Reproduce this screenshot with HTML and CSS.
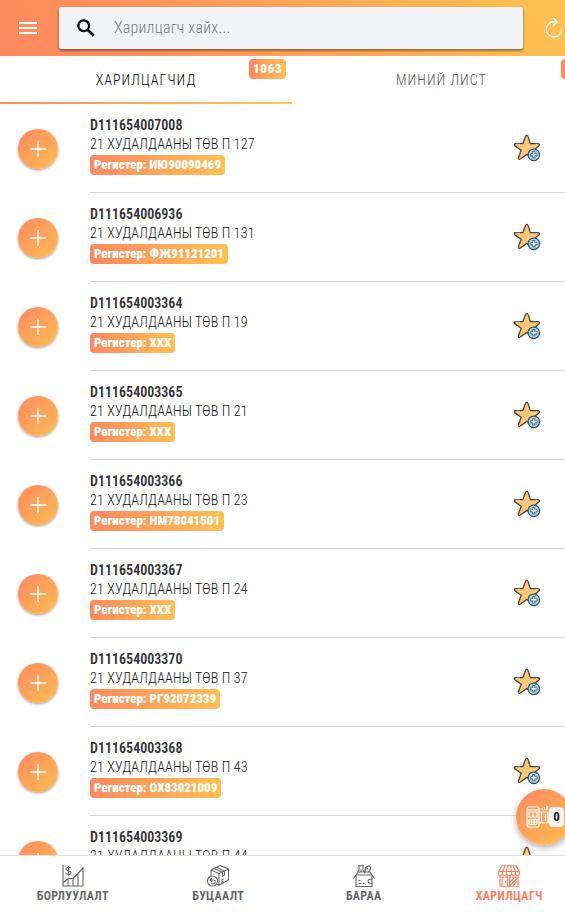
FILE: index.html
```
<!DOCTYPE html>
<html lang="mn">
<head>
    <meta charset="UTF-8">
    <meta name="viewport" content="width=device-width, initial-scale=1.0">
    <title>Харилцагч</title>
    <link rel="stylesheet" href="styles.css">
</head>
<body>
    <!-- shared icons -->
    <svg class="sprite">
        <symbol id="plus" viewBox="0 0 16 16">
            <path d="M8 0v16M0 8h16" fill="none" stroke="#fff" stroke-width="1.5"/>
        </symbol>
        <symbol id="star" viewBox="0 0 28 28">
            <path d="M13.8 1.4c.9 0 1.2.8 1.5 1.7l2 6.5 7.7.1c1.9.1 2 1.4.8 2.3l-5.7 4.7 2.1 6.6c.4 1.7-.5 2.3-1.8 1.5L14 20.4 7.3 25c-1.3.8-2.3.1-1.8-1.4l2.7-7.3L2 11.9c-1.2-.9-.9-2.1.8-2.2l7.1-.1 2.4-6.5c.3-.9.6-1.7 1.5-1.7z" fill="#ffc878" stroke="#4b443b" stroke-width="1.3" stroke-linejoin="round"/>
            <path d="M3.5 10.2h3M23 10.3l2 .2" stroke="#fff" stroke-width="1" stroke-dasharray="1 1"/>
            <circle cx="20.8" cy="20.8" r="5.8" fill="#8fd0ee" stroke="#34414b" stroke-width="1.1"/>
            <circle cx="20.8" cy="20.8" r="4.5" fill="#a5dcf5"/>
            <path d="M20.8 17.3v7M17.3 20.8h7" stroke="#283e50" stroke-width="2.8"/>
            <path d="M20.8 18v5.6M18 20.8h5.6" stroke="#fff" stroke-width="1.4"/>
        </symbol>
    </svg>

    <div class="app">
        <header class="header">
            <svg class="menu-icon" viewBox="0 0 18 12"><path d="M0 1h18M0 6h18M0 11h18" stroke="#fff" stroke-width="2"/></svg>
            <div class="search">
                <svg class="search-icon" viewBox="0 0 18 18"><circle cx="6.7" cy="6.7" r="5.4" fill="none" stroke="#000" stroke-width="2.3"/><path d="M10.7 10.7l6 6" stroke="#000" stroke-width="2.7"/></svg>
                <span class="placeholder">Харилцагч хайх...</span>
            </div>
            <svg class="refresh-icon" viewBox="0 0 18 22"><path d="M11.5 4.8H9a7.6 7.6 0 1 0 7.6 7.6" fill="none" stroke="#fff" stroke-width="1.4"/><path d="M8 1l4.2 3.8L8 8.7" fill="none" stroke="#fff" stroke-width="1.4"/></svg>
        </header>

        <nav class="tabs">
            <div class="tab active"><span class="tab-label">ХАРИЛЦАГЧИД</span><span class="badge count">1063</span></div>
            <div class="tab second"><span class="tab-label">МИНИЙ ЛИСТ</span><span class="badge count"></span></div>
        </nav>

        <main class="list">
            <div class="item">
                <button class="add"><svg><use href="#plus"/></svg></button>
                <div class="info"><b>D111654007008</b><span class="name">21 ХУДАЛДААНЫ ТӨВ П 127</span><span class="badge">Регистер: ИЮ90090469</span></div>
                <svg class="star"><use href="#star"/></svg>
            </div>
            <div class="item">
                <button class="add"><svg><use href="#plus"/></svg></button>
                <div class="info"><b>D111654006936</b><span class="name">21 ХУДАЛДААНЫ ТӨВ П 131</span><span class="badge">Регистер: ФЖ91121201</span></div>
                <svg class="star"><use href="#star"/></svg>
            </div>
            <div class="item">
                <button class="add"><svg><use href="#plus"/></svg></button>
                <div class="info"><b>D111654003364</b><span class="name">21 ХУДАЛДААНЫ ТӨВ П 19</span><span class="badge">Регистер: XXX</span></div>
                <svg class="star"><use href="#star"/></svg>
            </div>
            <div class="item">
                <button class="add"><svg><use href="#plus"/></svg></button>
                <div class="info"><b>D111654003365</b><span class="name">21 ХУДАЛДААНЫ ТӨВ П 21</span><span class="badge">Регистер: XXX</span></div>
                <svg class="star"><use href="#star"/></svg>
            </div>
            <div class="item">
                <button class="add"><svg><use href="#plus"/></svg></button>
                <div class="info"><b>D111654003366</b><span class="name">21 ХУДАЛДААНЫ ТӨВ П 23</span><span class="badge">Регистер: НМ78041501</span></div>
                <svg class="star"><use href="#star"/></svg>
            </div>
            <div class="item">
                <button class="add"><svg><use href="#plus"/></svg></button>
                <div class="info"><b>D111654003367</b><span class="name">21 ХУДАЛДААНЫ ТӨВ П 24</span><span class="badge">Регистер: XXX</span></div>
                <svg class="star"><use href="#star"/></svg>
            </div>
            <div class="item">
                <button class="add"><svg><use href="#plus"/></svg></button>
                <div class="info"><b>D111654003370</b><span class="name">21 ХУДАЛДААНЫ ТӨВ П 37</span><span class="badge">Регистер: РГ92072339</span></div>
                <svg class="star"><use href="#star"/></svg>
            </div>
            <div class="item">
                <button class="add"><svg><use href="#plus"/></svg></button>
                <div class="info"><b>D111654003368</b><span class="name">21 ХУДАЛДААНЫ ТӨВ П 43</span><span class="badge">Регистер: ОХ83021009</span></div>
                <svg class="star"><use href="#star"/></svg>
            </div>
            <div class="item">
                <button class="add"><svg><use href="#plus"/></svg></button>
                <div class="info"><b>D111654003369</b><span class="name">21 ХУДАЛДААНЫ ТӨВ П 44</span></div>
                <svg class="star"><use href="#star"/></svg>
            </div>
        </main>

        <button class="fab">
            <svg viewBox="0 0 24 24" fill="none" stroke="#fff" stroke-width="1.2">
                <rect x="1" y="2" width="12" height="20" rx="2"/>
                <path d="M1.5 4.8h11M3 7h8v5H3zM7 7.5v4M5.8 9.8L7 11l1.2-1.2M3 14.5h8v5H3zM3 17h8M5.7 14.5v5M8.3 14.5v5M13 7h9v11h-9M15.5 7v11M19.5 9v7M16 5V3M18.5 5V2M21 5V1"/>
            </svg>
            <span class="fab-count">0</span>
        </button>

        <footer class="bottom-nav">
            <div class="nav-item">
                <svg viewBox="0 0 22 22"><path d="M1 0v21h20V3L14 10.5l-3 3H6L1 18M6 13.5V21M11 13.5V21M16 8.5V21M9 3.3C8 1.8 4 1.7 4 4s5 1.3 5 3.7S4.5 9.7 3.6 7.8M6.5.8v9.7"/></svg>
                <span>БОРЛУУЛАЛТ</span>
            </div>
            <div class="nav-item">
                <svg viewBox="0 0 22 22"><path d="M4 11V5l9-4.5L21.5 4v11L12 20V8.5L4 5M12 8.5L21.500 4M7 3.5l8.500 3.700v4l2-1.200V6L9.500 2.300M14 15.500l2.500-1.200M14 17.500l2.500-1.200M12 20l-2-.8"/><circle cx="5.5" cy="16" r="5"/><path d="M5 13l-2 2 2 2M3 15h3.500c2.500 0 2.300 3.500 0 3.500H4"/></svg>
                <span>БУЦААЛТ</span>
            </div>
            <div class="nav-item">
                <svg viewBox="0 0 22 22"><path d="M3 10h16v11.500H3zM3 10l-2.500 3.500M19 10l2.500 3.500M3 10l2-3h12l2 3M5 .7h6M6 1v4L4.500 7M10 1v4l2 3M12 7V4.500C12 2 16 0 17 1.500S17.500 6 15 7M8 7V4.500M12 4.500l3-1M5.500 15.500h2M5.500 18.500h3M10 18.500h1.500M19 14c-3 0-4 1.500-4 2.500s2 2 4 2"/></svg>
                <span>БАРАА</span>
            </div>
            <div class="nav-item active">
                <svg viewBox="0 0 22 22"><path d="M4 .7h14l3.500 6v2c0 2.400-3.500 2.400-4 0 0 2.400-4 2.400-4 0 0 2.400-5 2.400-5 0 0 2.400-4 2.400-4 0-.5 2.400-4 2.400-4 0v-2zM.5 6.500h21M7 .7l-2.500 6v2M9.500.7l-1 6v2M12.500.7l1 6v2M15 .7l2.500 6v2M2 10.500V21.300h18V10.500M4 21V12h5.500v9M7.500 16v2M11.500 21V12H20M12 17l4-4M12 20.500l7-7M15 20.500l4-4"/></svg>
                <span>ХАРИЛЦАГЧ</span>
            </div>
        </footer>
    </div>
</body>
</html>
```
FILE: styles.css
```
* {
    box-sizing: border-box;
}

html, body {
    height: 100%;
    margin: 0;
    overflow: hidden;
}

body {
    font-family: "Roboto Condensed", Roboto, "Liberation Sans", sans-serif;
    font-stretch: 75%;
    font-weight: 300;
    background-color: #fff;
    color: #333;
}

button {
    border: none;
    padding: 0;
    font-family: inherit;
}

.sprite {
    display: none;
}

.app {
    position: relative;
    display: flex;
    flex-direction: column;
    width: 582px;
    height: 912px;
}

.header {
    display: flex;
    align-items: center;
    flex: none;
    height: 56px;
    padding-left: 19px;
    background: linear-gradient(45deg, #ff8960, #ff8f5c 20%, #ffbf52 90%);
}

.menu-icon {
    width: 18px;
    height: 12px;
}

.search {
    display: flex;
    align-items: center;
    width: 464px;
    height: 42px;
    margin-left: 22px;
    padding-left: 18px;
    border-radius: 2px;
    background-color: #f3f4f7;
    box-shadow: 0 2px 2px rgba(0, 0, 0, 0.24), 0 1px 3px rgba(0, 0, 0, 0.3);
}

.search-icon {
    width: 18px;
    height: 18px;
}

.placeholder {
    margin: -1px 0 0 19px;
    font-size: 16px;
    letter-spacing: 0.2px;
    color: #77787b;
}

.refresh-icon {
    width: 18px;
    height: 22px;
    margin-left: 22px;
}

.tabs {
    display: flex;
    flex: none;
    height: 48px;
}

.tab {
    position: relative;
    display: flex;
    flex: none;
    justify-content: center;
    align-items: center;
    width: 292px;
    font-size: 14px;
    letter-spacing: 1.05px;
    color: #555;
}

.tab.second {
    width: 299px;
}

.tab.active {
    padding-top: 2px;
    color: #000;
    border-bottom: 2px solid;
    border-image: linear-gradient(90deg, #ff8960, #ffc852) 1;
}

.badge {
    align-self: flex-start;
    height: 20px;
    padding: 0 4px;
    border-radius: 4px;
    background: linear-gradient(90deg, #ff8960, #ffc052);
    color: #fff;
    font-size: 13px;
    font-weight: 900;
    letter-spacing: -0.05px;
    line-height: 20px;
    white-space: nowrap;
}

.count {
    position: absolute;
    top: 3px;
    right: 6px;
    letter-spacing: 0.6px;
}

.second .count {
    right: 5px;
    min-width: 25px;
}

.list {
    flex: 1;
    min-height: 0;
    overflow: hidden;
}

.item {
    display: flex;
    height: 89px;
    padding-left: 18px;
}

.add {
    display: flex;
    flex: none;
    align-items: center;
    justify-content: center;
    width: 40px;
    height: 40px;
    margin-top: 25px;
    border-radius: 50%;
    background: linear-gradient(135deg, #ff8960, #ffbd52);
    box-shadow: 0 1px 3px rgba(0, 0, 0, 0.4);
}

.add svg {
    width: 16px;
    height: 16px;
}

.info {
    display: flex;
    flex: none;
    flex-direction: column;
    width: 493px;
    margin-left: 32px;
    padding-top: 12px;
    border-bottom: 1px solid #d8d8d8;
    font-size: 14px;
    line-height: 19px;
}

.info b {
    font-weight: 600;
}

.name {
    letter-spacing: 0.16px;
    color: #111;
}

.info .badge {
    margin-top: 1px;
}

.star {
    flex: none;
    width: 28px;
    height: 28px;
    margin: 30px 0 0 -70px;
}

.fab {
    position: absolute;
    left: 516px;
    top: 789px;
    display: flex;
    align-items: center;
    width: 56px;
    height: 56px;
    padding-left: 10px;
    border-radius: 50%;
    background: linear-gradient(145deg, #ff8960, #ffbd52);
    box-shadow: 0 3px 6px rgba(0, 0, 0, 0.3);
}

.fab svg {
    flex: none;
    width: 24px;
    height: 24px;
}

.fab-count {
    flex: none;
    width: 15px;
    margin-left: -1px;
    border-radius: 4px;
    background-color: #f4f4f4;
    font-size: 13px;
    font-weight: bold;
    line-height: 20px;
    text-align: center;
    color: #111;
}

.bottom-nav {
    display: flex;
    flex: none;
    height: 57px;
    border-top: 1px solid #dfdfdf;
    background-color: #fff;
}

.nav-item {
    display: flex;
    flex: 1;
    flex-direction: column;
    align-items: center;
    padding-top: 9px;
    font-size: 12px;
    font-weight: bold;
    letter-spacing: 0.35px;
    line-height: 18px;
    color: #666;
}

.nav-item svg {
    width: 22px;
    height: 22px;
    fill: none;
    stroke: currentColor;
    stroke-width: 1.1;
}

.nav-item.active {
    color: #ff7d60;
}
```
